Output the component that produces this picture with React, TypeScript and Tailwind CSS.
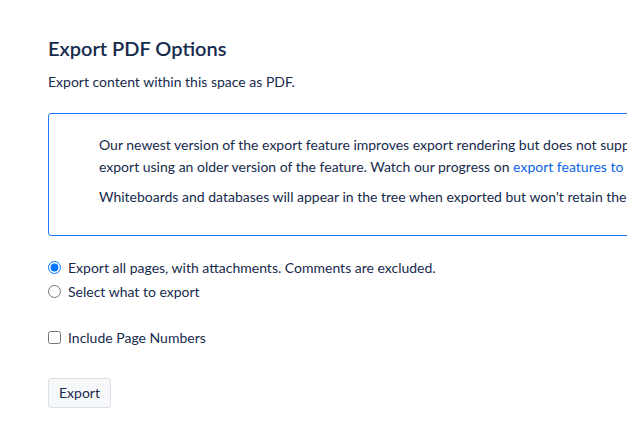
export default function App() {
  return (
    <div
      className="h-[439px] w-[627px] overflow-hidden bg-white px-12 text-sm text-[#172B4D]"
      style={{ fontFamily: '"Segoe UI", "Lato", "Liberation Sans", sans-serif' }}
    >
      <h1 className="pt-[36px] text-[20px] font-semibold leading-6">Export PDF Options</h1>
      <p className="mt-[12px] leading-5">Export content within this space as PDF.</p>

      <div className="mt-[21px] h-[123px] w-[820px] rounded-[3px] border border-[#1D7AFC] pl-[50px] pt-[20px]">
        <p className="leading-[22px]">
          Our newest version of the export feature improves export rendering but does not support some macros. You can
          <br />
          export using an older version of the feature. Watch our progress on{" "}
          <a className="text-[#0C66E4]">export features to come</a>.
        </p>
        <p className="mt-2 leading-[22px]">
          Whiteboards and databases will appear in the tree when exported but won't retain their content.
        </p>
      </div>

      <div className="mt-[22px] flex flex-col gap-[5px]">
        <label className="flex h-[19px] items-center gap-[7px]">
          <input type="radio" name="scope" defaultChecked className="m-0 h-[13px] w-[13px]" />
          <span>Export all pages, with attachments. Comments are excluded.</span>
        </label>
        <label className="flex h-[19px] items-center gap-[7px]">
          <input type="radio" name="scope" className="m-0 h-[13px] w-[13px]" />
          <span>Select what to export</span>
        </label>
      </div>

      <label className="mt-[27px] flex h-[19px] items-center gap-[7px]">
        <input type="checkbox" className="m-0 h-[13px] w-[13px]" />
        <span>Include Page Numbers</span>
      </label>

      <button className="mt-[31px] h-[30px] rounded-[3px] border border-[#DCDFE4] bg-[#F7F8F9] px-[10px] leading-5">
        Export
      </button>
    </div>
  );
}
